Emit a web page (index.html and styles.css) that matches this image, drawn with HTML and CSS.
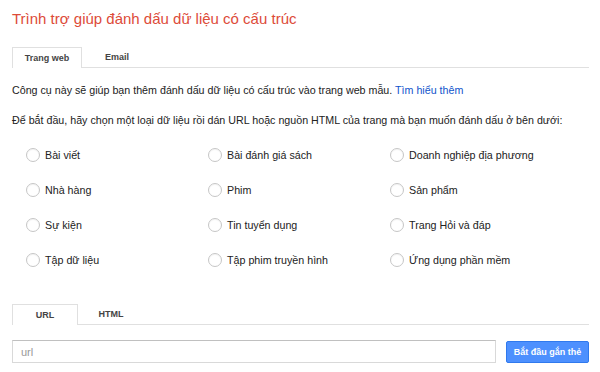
FILE: index.html
```html
<!DOCTYPE html>
<html lang="vi">
<head>
  <meta charset="UTF-8" />
  <meta name="viewport" content="width=device-width, initial-scale=1.0">
  <title>Trình trợ giúp đánh dấu dữ liệu có cấu trúc</title>
  <link rel="stylesheet" href="styles.css">
</head>
<body>
  <h1 class="titulo">Trình trợ giúp đánh dấu dữ liệu có cấu trúc</h1>

  <div class="tabs tabs-tipo">
    <div class="tab ativo">Trang web</div>
    <div class="tab">Email</div>
  </div>

  <p class="texto">Công cụ này sẽ giúp bạn thêm đánh dấu dữ liệu có cấu trúc vào trang web mẫu. <a href="#">Tìm hiểu thêm</a></p>
  <p class="texto">Để bắt đầu, hãy chọn một loại dữ liệu rồi dán URL hoặc nguồn HTML của trang mà bạn muốn đánh dấu ở bên dưới:</p>

  <div class="opcoes">
    <label class="opcao"><span class="radio"></span>Bài viết</label>
    <label class="opcao"><span class="radio"></span>Bài đánh giá sách</label>
    <label class="opcao"><span class="radio"></span>Doanh nghiệp địa phương</label>
    <label class="opcao"><span class="radio"></span>Nhà hàng</label>
    <label class="opcao"><span class="radio"></span>Phim</label>
    <label class="opcao"><span class="radio"></span>Sản phẩm</label>
    <label class="opcao"><span class="radio"></span>Sự kiện</label>
    <label class="opcao"><span class="radio"></span>Tin tuyển dụng</label>
    <label class="opcao"><span class="radio"></span>Trang Hỏi và đáp</label>
    <label class="opcao"><span class="radio"></span>Tập dữ liệu</label>
    <label class="opcao"><span class="radio"></span>Tập phim truyền hình</label>
    <label class="opcao"><span class="radio"></span>Ứng dụng phần mềm</label>
  </div>

  <div class="tabs tabs-fonte">
    <div class="tab ativo">URL</div>
    <div class="tab">HTML</div>
  </div>

  <div class="linha-url">
    <input type="text" class="campo" placeholder="url">
    <button class="botao">Bắt đầu gắn thẻ</button>
  </div>
</body>
</html>
```

FILE: styles.css
```css
html, body {
  background: #fff;
  margin: 0;
  padding: 0;
}
body {
  font-family: Arial, 'Liberation Sans', sans-serif;
  color: #222;
  padding: 0 11px 0 12px;
}
.titulo {
  color: #dd4b39;
  font-size: 15px;
  font-weight: normal;
  line-height: 24px;
  margin: 7px 0 0;
}
.tabs {
  display: flex;
  border-bottom: 1px solid #e0e0e0;
  height: 20px;
}
.tabs-tipo {
  margin-top: 16px;
}
.tabs-fonte {
  margin-top: 27px;
}
.tab {
  width: 68px;
  height: 20px;
  line-height: 20px;
  text-align: center;
  font-size: 9px;
  font-weight: bold;
  color: #444;
  box-sizing: border-box;
}
.tab.ativo {
  border: 1px solid #e0e0e0;
  border-bottom: none;
  height: 21px;
  background: #fff;
}
.tabs-tipo .tab { width: 70px; }
.tabs-fonte .tab { width: 66px; }
.texto {
  font-size: 10.7px;
  line-height: 16px;
  margin: 14px 0 0;
}
.texto + .texto {
  margin-top: 14px;
}
.texto a {
  color: #15c;
  text-decoration: none;
}
.opcoes {
  display: grid;
  grid-template-columns: 182px 182px 182px;
  grid-auto-rows: 35px;
  padding-left: 14px;
  margin-top: 9px;
}
.opcao {
  display: flex;
  align-items: center;
  font-size: 10.7px;
  color: #222;
}
.radio {
  width: 12px;
  height: 12px;
  border: 1px solid #c6c6c6;
  border-radius: 50%;
  margin-right: 5px;
  box-shadow: inset 0 1px 1px rgba(0,0,0,0.05);
}
.linha-url {
  display: flex;
  align-items: center;
  margin-top: 15px;
}
.campo {
  flex: 1;
  height: 23px;
  box-sizing: border-box;
  border: 1px solid #d9d9d9;
  border-top-color: #c0c0c0;
  padding: 0 8px;
  font-size: 11px;
  font-family: Arial, 'Liberation Sans', sans-serif;
  margin: 0;
}
.campo::placeholder {
  color: #999;
}
.botao {
  margin-left: 10px;
  width: 83px;
  height: 22px;
  background: #4d90fe;
  border: 1px solid #3079ed;
  border-radius: 2px;
  color: #fff;
  font-size: 9px;
  font-weight: bold;
  font-family: Arial, 'Liberation Sans', sans-serif;
  padding: 0;
}
```
